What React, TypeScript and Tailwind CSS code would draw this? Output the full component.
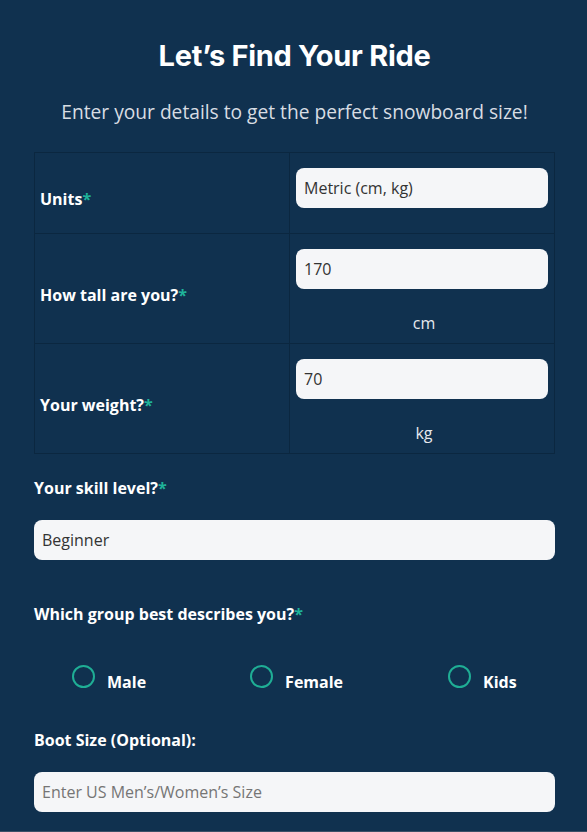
const units = "metric";

type RowProps = {
  label: string;
  value: string;
  unit?: string;
  height: string;
};

const Req = () => <span className="text-[#1fb39a]">*</span>;

const TableRow = ({ label, value, unit, height }: RowProps) => {
  return (
    <div className={`flex border-b border-[#0b2740] last:border-b-0 ${height}`}>
      <div className="flex w-[255px] items-center border-r border-[#0b2740] px-[5px] pt-[12px]">
        <span className="text-[16px] font-bold text-white">
          {label}
          <Req />
        </span>
      </div>
      <div className="flex flex-1 flex-col px-[6px] pt-[15px]">
        <div className="flex h-[40px] items-center rounded-lg bg-[#f5f6f8] px-[8px] text-[16px] text-[#333]">
          {value}
        </div>
        {unit ? (
          <p className="mt-[22px] pl-[4px] text-center text-[16px] leading-6 text-[#e6e9ee]">
            {unit}
          </p>
        ) : null}
      </div>
    </div>
  );
};

const Radio = ({ label }: { label: string }) => (
  <label className="flex items-start gap-[12px]">
    <span className="mt-[-7px] h-[23px] w-[23px] rounded-full border-2 border-[#1fae95]" />
    <span className="text-[16px] font-bold leading-5 text-white">{label}</span>
  </label>
);

export default function App() {
  return (
    <div
      className="min-h-[832px] border-b border-[#3b5067] bg-[#10314f] pl-[34px] pr-[32px]"
      style={{ fontFamily: '"Open Sans", sans-serif' }}
    >
      <h1
        className="pt-[36px] text-center text-[29px] font-bold leading-10 tracking-[-0.3px] text-white"
        style={{ fontFamily: "Inter, sans-serif" }}
      >
        Let’s Find Your Ride
      </h1>
      <p className="mt-[20px] text-center text-[19.2px] leading-8 text-[#d8dde3]">
        Enter your details to get the perfect snowboard size!
      </p>

      <div className="mt-[24px] border border-[#0b2740]">
        <TableRow
          label="Units"
          value={units === "metric" ? "Metric (cm, kg)" : "Imperial (in, lb)"}
          height="h-[81px]"
        />
        <TableRow label="How tall are you?" value="170" unit="cm" height="h-[110px]" />
        <TableRow label="Your weight?" value="70" unit="kg" height="h-[109px]" />
      </div>

      <p className="mt-[24px] text-[16px] font-bold leading-5 text-white">
        Your skill level?
        <Req />
      </p>
      <div className="mt-[22px] flex h-[40px] items-center rounded-lg bg-[#f5f6f8] px-[8px] text-[16px] text-[#333]">
        Beginner
      </div>

      <p className="mt-[44px] text-[16px] font-bold leading-5 text-white">
        Which group best describes you?
        <Req />
      </p>

      <div className="mt-[48px] flex gap-[104px] pl-[38px]">
        <Radio label="Male" />
        <Radio label="Female" />
        <div className="pl-[1px]">
          <Radio label="Kids" />
        </div>
      </div>

      <p className="mt-[38px] text-[16px] font-bold leading-5 text-white">
        Boot Size (Optional):
      </p>
      <div className="mt-[22px] flex h-[40px] items-center rounded-lg bg-[#f5f6f8] px-[8px] text-[16px] text-[#757575]">
        Enter US Men’s/Women’s Size
      </div>
    </div>
  );
}
